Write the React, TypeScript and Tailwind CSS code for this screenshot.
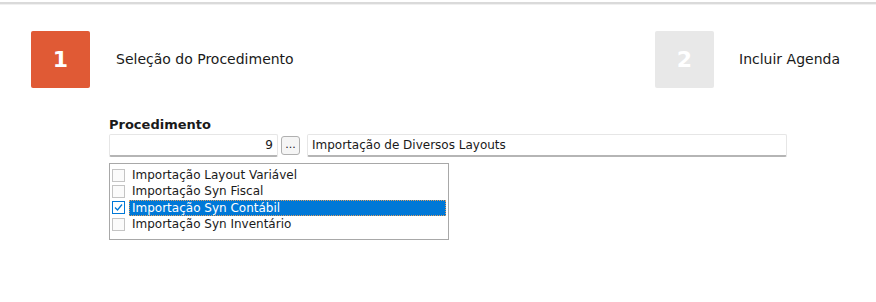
import React from 'react';

const itens = [
  { label: 'Importação Layout Variável', checked: false },
  { label: 'Importação Syn Fiscal', checked: false },
  { label: 'Importação Syn Contábil', checked: true },
  { label: 'Importação Syn Inventário', checked: false },
];

const font = { fontFamily: 'Tahoma, "DejaVu Sans", Verdana, sans-serif' };

const App = () => {
  return (
    <div className="w-[876px] h-[302px] bg-white text-[#1a1a1a]" style={font}>
      <div className="pt-[2px]">
        <div className="h-[3px] border-t-2 border-[#dadada] bg-[#f0f0f0]" />
      </div>

      {/* Steps */}
      <div className="flex items-center justify-between pl-[31px] pr-[36px] mt-[26px]">
        <div className="flex items-center">
          <div className="w-[59px] h-[57px] rounded-[2px] bg-[#e05a35] flex items-center justify-center text-white text-[22px] font-bold">
            1
          </div>
          <span className="ml-[26px] text-[14px]">Seleção do Procedimento</span>
        </div>
        <div className="flex items-center">
          <div className="w-[59px] h-[57px] rounded-[2px] bg-[#e8e8e8] flex items-center justify-center text-white text-[22px] font-bold">
            2
          </div>
          <span className="ml-[25px] text-[14px]">Incluir Agenda</span>
        </div>
      </div>

      {/* Form */}
      <div className="ml-[109px] mt-[29px]">
        <div className="text-[13px] font-bold leading-[16px]">Procedimento</div>
        <div className="flex items-center mt-[1px]">
          <div className="w-[169px] h-[23px] border border-[#e6e6e6] border-b-2 border-b-[#b5b5b5] rounded-[2px] flex items-center justify-end pr-[4px] text-[12px]">
            9
          </div>
          <button className="ml-[3px] w-[19px] h-[19px] border border-[#b0b0b0] rounded-[3px] bg-[#f5f5f5] text-[11px] leading-[14px] flex items-end justify-center pb-[2px]">
            ...
          </button>
          <div className="ml-[7px] w-[480px] h-[23px] border border-[#e6e6e6] border-b-2 border-b-[#b5b5b5] rounded-[2px] flex items-center pl-[4px] text-[12px]">
            Importação de Diversos Layouts
          </div>
        </div>

        <div className="mt-[6px] w-[340px] h-[77px] border border-[#a8a8a8] pt-[3px] px-[2px]">
          {itens.map((item) => (
            <div key={item.label} className="flex items-center h-[16.33px]">
              <span
                className={`w-[13px] h-[13px] border flex items-center justify-center ${
                  item.checked ? 'border-[#0078d7] bg-white' : 'border-[#c4c4c4] bg-[#fbfbfb]'
                }`}
              >
                {item.checked && (
                  <svg width="11" height="11" viewBox="0 0 11 11">
                    <path d="M2 5.5 L4.5 8 L9 2.5" fill="none" stroke="#0078d7" strokeWidth="1.3" />
                  </svg>
                )}
              </span>
              <span
                className={`ml-[4px] flex-1 h-[16px] flex items-center pl-[3px] text-[12px] leading-[16px] ${
                  item.checked
                    ? 'bg-[#0078d7] text-white outline outline-1 outline-dotted outline-[#e0a060] -outline-offset-1'
                    : ''
                }`}
              >
                {item.label}
              </span>
            </div>
          ))}
        </div>
      </div>
    </div>
  );
};

export default App;
